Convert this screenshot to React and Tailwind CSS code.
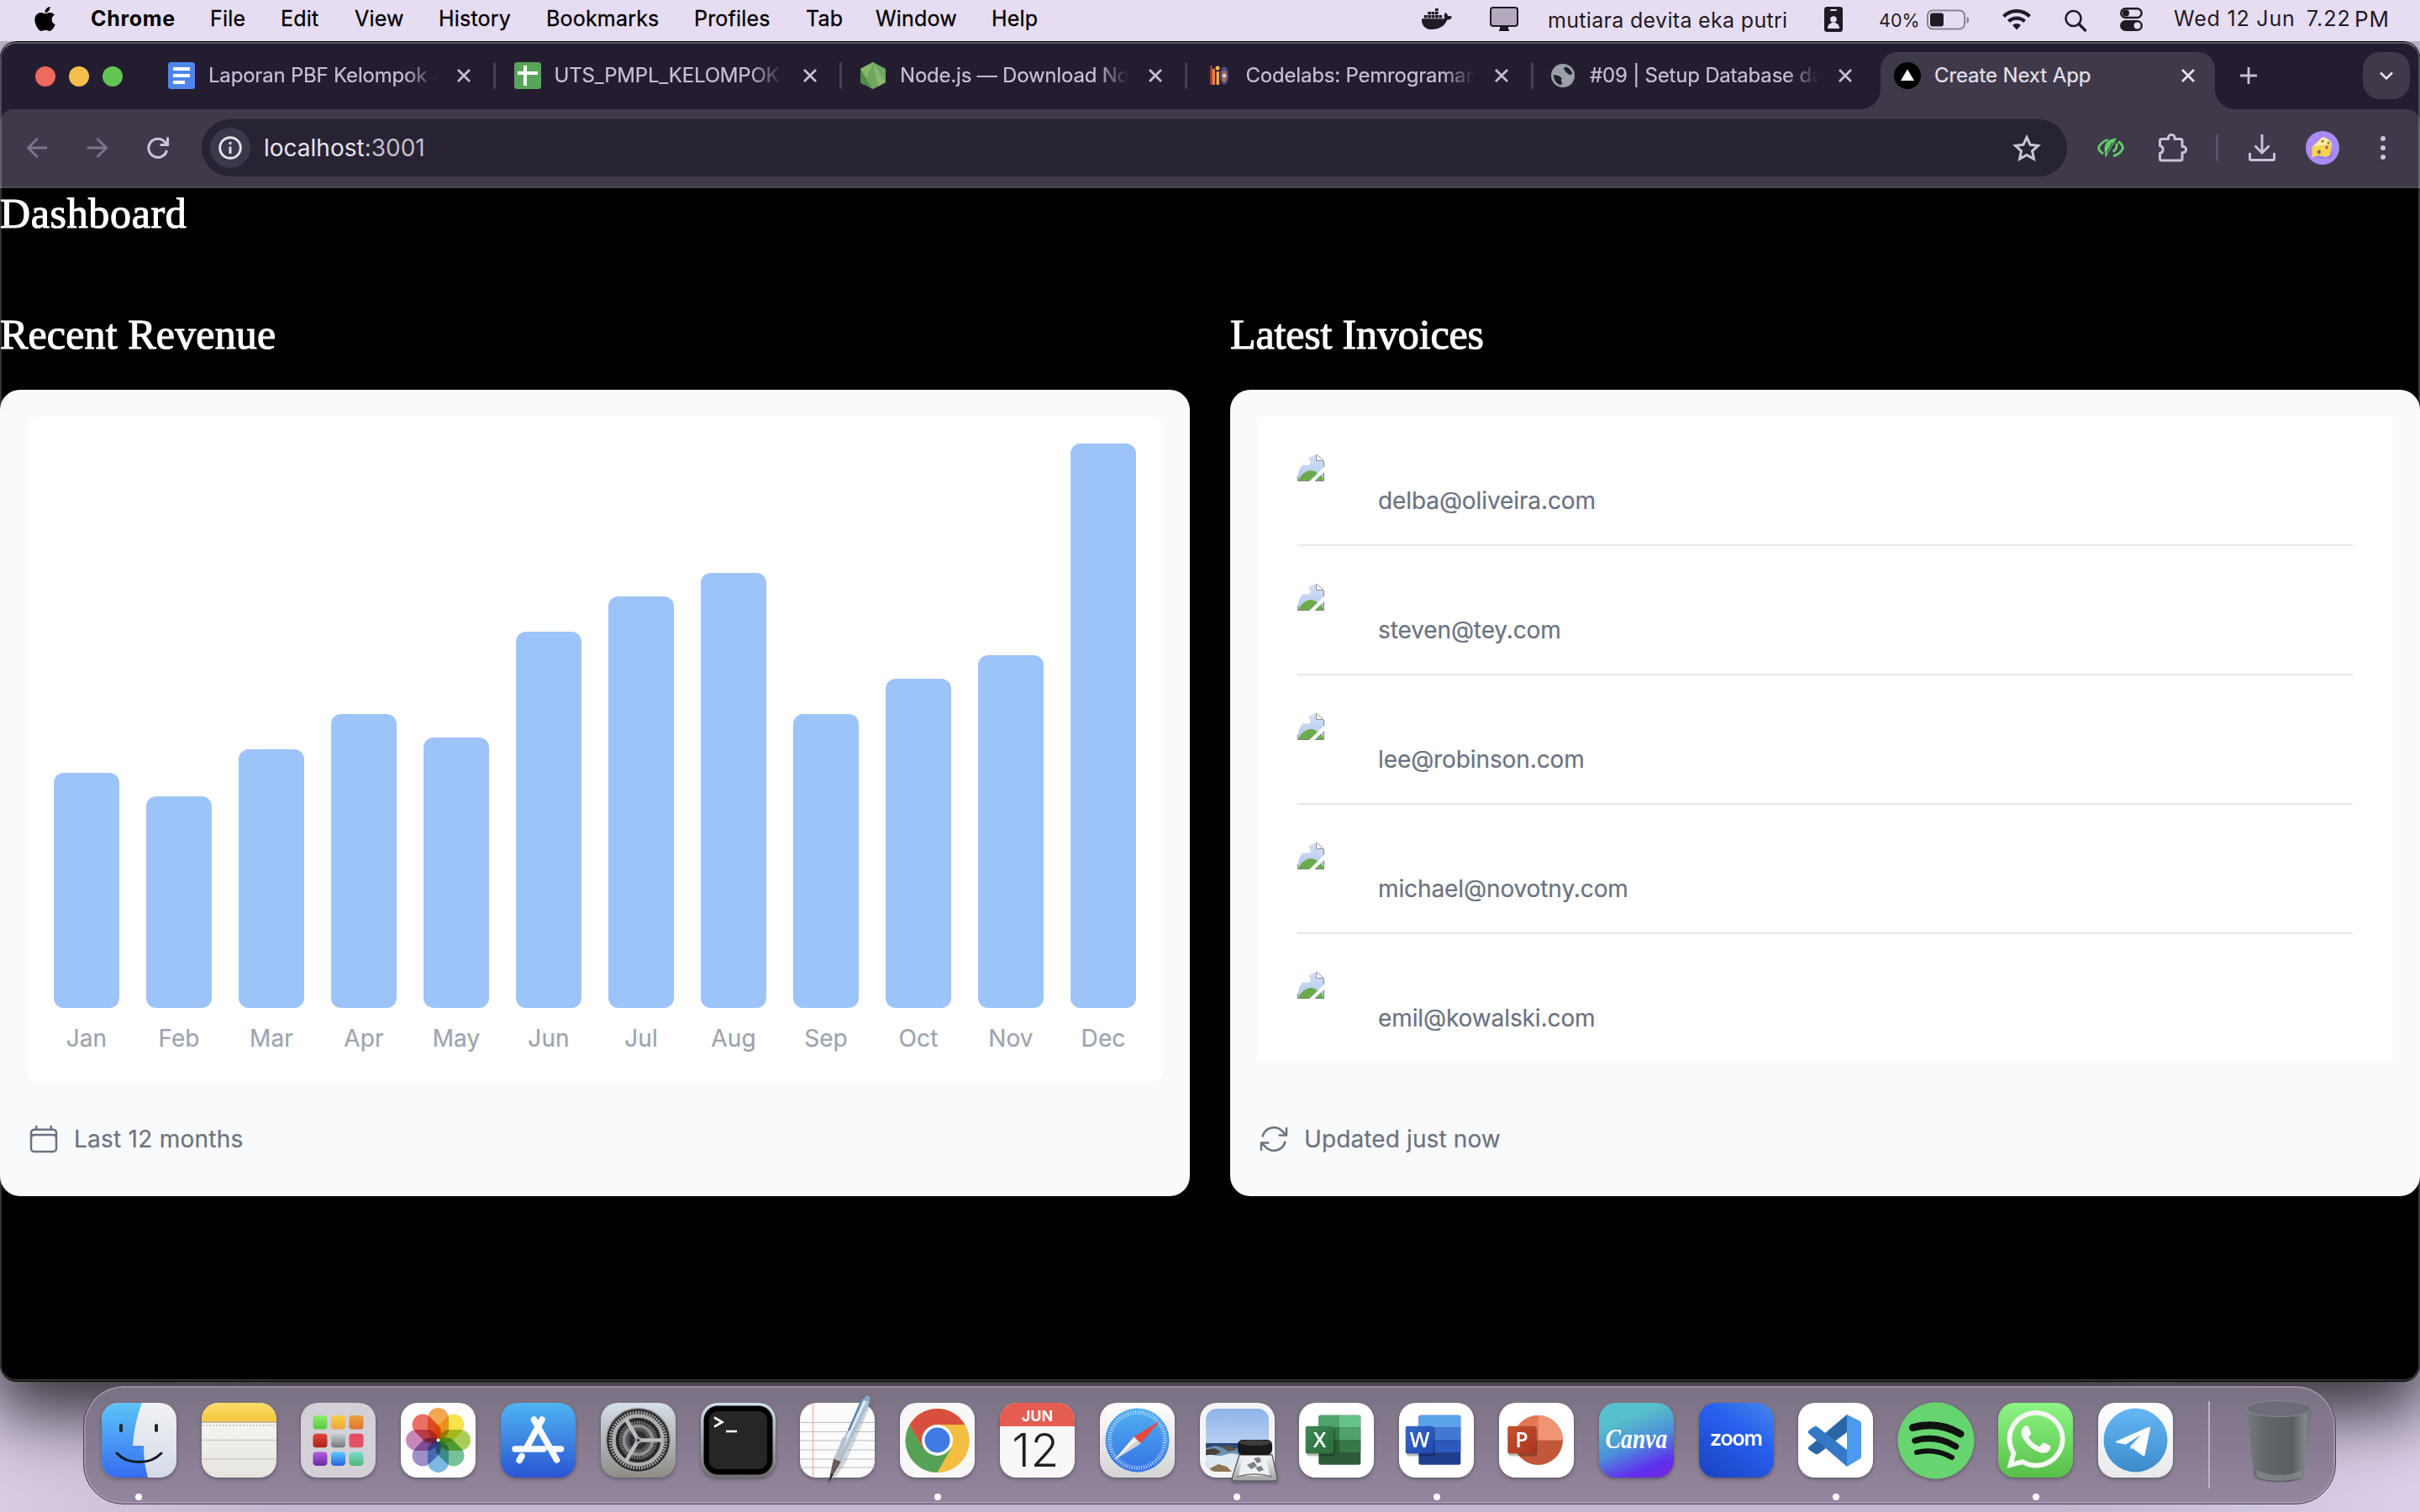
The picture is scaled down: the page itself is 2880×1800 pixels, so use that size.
import React from "react";
import { FaApple, FaDocker, FaWhatsapp } from "react-icons/fa";

/* ---------- Menu bar ---------- */

const menus = [
  ["File", "w-[84px]"],
  ["Edit", "w-[88px]"],
  ["View", "w-[100px]"],
  ["History", "w-[128px]"],
  ["Bookmarks", "w-[176px]"],
  ["Profiles", "w-[133px]"],
  ["Tab", "w-[83px]"],
  ["Window", "w-[138px]"],
  ["Help", "w-[80px]"],
];

function MenuBar() {
  return (
    <header className="relative z-20 flex h-[49px] shrink-0 items-center bg-[#e7ddf2] pb-[4px] text-[25px] leading-[45px] text-black">
      <div className="flex w-[108px] shrink-0 pl-[37px]">
        <FaApple className="h-[33px] w-[33px]" />
      </div>
      <div className="w-[142px] shrink-0 font-bold tracking-[0.7px]">Chrome</div>
      {menus.map(([label, w]) => (
        <div key={label} className={`${w} shrink-0 tracking-[0.2px] [-webkit-text-stroke:0.3px_black]`}>
          {label}
        </div>
      ))}
      <div className="grow" />
      <div className="flex h-[45px] shrink-0 items-center text-[#1f1a24]">
        <div className="w-[81px]">
          <FaDocker className="h-[37px] w-[36px]" />
        </div>
        <svg className="mr-[35px] h-[30px] w-[34px]" viewBox="0 0 34 30">
          <rect x="1" y="1" width="32" height="22" rx="3" fill="#b5aabd" stroke="currentColor" strokeWidth="2" />
          <path d="M12 24h10v3h1v2H11v-2h1z" fill="currentColor" />
        </svg>
        <div className="w-[329px] pt-[3px] tracking-[0.32px]">mutiara devita eka putri</div>
        <svg className="mr-[43px] h-[30px] w-[22px]" viewBox="0 0 22 30">
          <rect width="22" height="30" rx="3.500" fill="currentColor" />
          <rect x="7" y="3" width="8" height="2" rx="1" fill="#e7ddf2" />
          <circle cx="11" cy="15" r="3.800" fill="#e7ddf2" />
          <path d="M4 26c0-5 3-7 7-7s7 2 7 7z" fill="#e7ddf2" />
        </svg>
        <div className="w-[57px] pt-[3px] text-[21.500px]">40%</div>
        <svg className="mt-[3px] mr-[40px] h-[26px] w-[50px]" viewBox="0 0 50 26">
          <rect x="1" y="1.500" width="44" height="22" rx="6" fill="none" stroke="#8b8394" strokeWidth="2" />
          <rect x="4" y="4.500" width="16" height="16" rx="3" fill="currentColor" />
          <path d="M47.500 9v8q3-1 3-4t-3-4z" fill="#8b8394" />
        </svg>
        <svg className="mr-[40px] h-[26px] w-[34px]" viewBox="0 0 34 26" fill="none" stroke="currentColor" strokeWidth="4.200">
          <path d="M1.500 9.500a22 22 0 0 1 31 0" />
          <path d="M7.500 15.500a13.500 13.500 0 0 1 19 0" />
          <path d="M17 25.500l-5-5.500a7 7 0 0 1 10 0z" fill="currentColor" stroke="none" />
        </svg>
        <svg className="mt-[3px] mr-[39px] h-[27px] w-[27px]" viewBox="0 0 27 27" fill="none" stroke="currentColor" strokeWidth="2.600">
          <circle cx="10.500" cy="11" r="9" />
          <path d="M17 17.500l7.500 7.500" strokeWidth="3.200" strokeLinecap="round" />
        </svg>
        <svg className="mr-[37px] h-[28px] w-[27px]" viewBox="0 0 27 28">
          <rect x="1.200" y="1.200" width="24.500" height="10.800" rx="5.400" fill="none" stroke="currentColor" strokeWidth="2.400" />
          <circle cx="7" cy="6.600" r="4" fill="currentColor" />
          <rect y="15" width="27" height="13" rx="6.500" fill="currentColor" />
          <circle cx="20.500" cy="21.500" r="4" fill="#e7ddf2" />
        </svg>
        <div className="w-[158px] tracking-[0.8px]">Wed 12 Jun</div>
        <div className="w-[57px] tracking-[1px]">7.22</div>
        <div className="w-[78px] text-[26px] tracking-[1px]">PM</div>
      </div>
    </header>
  );
}

/* ---------- Browser chrome ---------- */

const DocsIcon = () => (
  <svg viewBox="0 0 32 32" className="h-8 w-8 shrink-0">
    <rect width="32" height="32" rx="3.500" fill="#5086ec" />
    <path d="M6 6h20v4H6zM6 14h20v4H6zM6 22h14v4H6z" fill="#fff" />
  </svg>
);
const SheetsIcon = () => (
  <svg viewBox="0 0 32 32" className="h-8 w-8 shrink-0">
    <rect width="32" height="32" rx="3.500" fill="#57a55a" />
    <path d="M11 4h4v7h13v4H15v13h-4V15H4v-4h7z" fill="#fff" />
  </svg>
);
const NodeIcon = () => (
  <svg viewBox="0 0 32 32" className="h-8 w-8 shrink-0">
    <path d="M16 0l15 8v16l-15 8L1 24V8z" fill="#6fa85c" />
    <path d="M16 0L1 8v16l4 3z" fill="#86b867" />
    <path d="M1 8l14 24-14-8z" fill="#4e8a48" />
    <path d="M16 0l6 29 9-5z" fill="#8ab673" />
  </svg>
);
const CodelabsIcon = () => (
  <svg viewBox="0 0 32 32" className="h-8 w-8 shrink-0">
    <rect x="5" y="4" width="3" height="23" rx="1.500" fill="#8c3b3e" />
    <rect x="7.500" y="8" width="3.500" height="19" rx="1" fill="#ee7a38" />
    <circle cx="14" cy="7" r="2.500" fill="#f2b84a" />
    <rect x="12.500" y="11" width="3.500" height="16" rx="1" fill="#f4a54c" />
    <ellipse cx="22" cy="16" rx="5" ry="11" fill="#4c4a86" />
    <ellipse cx="22" cy="17" rx="3.200" ry="7" fill="#a9704e" />
    <circle cx="22" cy="16" r="2" fill="#e8dcf4" />
  </svg>
);
const GlobeIcon = () => (
  <svg viewBox="0 0 32 32" className="h-8 w-8 shrink-0">
    <circle cx="16" cy="16" r="14" fill="#9aa0a6" />
    <path d="M18 5.500c4 1 7 4 8.200 8-1.500 2-3.700 2-4.700.500s-3-1-3.500-3-2-1.500-2-3.500z" fill="#241d30" transform="translate(1 0)" />
    <path d="M4.800 15c4 .500 8 1 9.200 3.500s-1 3 .500 5-.500 3.500-2 3.500C8 25 5 21 4.800 15z" fill="#241d30" />
    <path d="M19 18.500c2.500-.500 5 .500 7 0-1 4-3.500 7-7.500 8.500-1-2 .500-3 0-4.500s-1.500-3 .500-4z" fill="#9aa0a6" />
  </svg>
);

const tabs = [
  ["Laporan PBF Kelompok 4", DocsIcon, "w-[411.500px]"],
  ["UTS_PMPL_KELOMPOK", SheetsIcon, "w-[411.500px]"],
  ["Node.js — Download Node", NodeIcon, "w-[411.500px]"],
  ["Codelabs: Pemrograman", CodelabsIcon, "w-[409.500px]"],
  ["#09 | Setup Database dan", GlobeIcon, "w-[394px]"],
];

const Close = ({ className }) => (
  <svg viewBox="0 0 20 20" className={`h-5 w-5 shrink-0 ${className ?? ""}`}>
    <path d="M3 3l14 14M17 3L3 17" stroke="currentColor" strokeWidth="2.800" />
  </svg>
);

function TabStrip() {
  return (
    <div className="flex h-[78px] items-start bg-[#241d30]">
      <div className="flex h-[78px] w-[200px] shrink-0 items-center gap-4 pl-[42px]">
        <span className="h-6 w-6 rounded-full bg-[#ed6a5e]" />
        <span className="h-6 w-6 rounded-full bg-[#f5bf4f]" />
        <span className="h-6 w-6 rounded-full bg-[#61c554]" />
      </div>
      {tabs.map(([title, Icon, w], i) => (
        <div key={title} className={`flex h-[76px] shrink-0 items-center text-[#c9bdd8] ${w}`}>
          <Icon />
          <div className="mb-px ml-4 w-[272px] shrink-0 overflow-hidden text-[24px] tracking-[-0.200px] whitespace-nowrap [-webkit-text-stroke:0.2px_#c9bdd8] [mask-image:linear-gradient(to_right,black_86%,transparent_100%)]">
            {title}
          </div>
          <Close className="ml-[22px]" />
          {i < 4 && <span className="ml-[25px] h-8 w-[3px] rounded-full bg-[#463f52]" />}
        </div>
      ))}
      <div className="relative mt-[10px] flex h-[68px] w-[398px] shrink-0 items-center rounded-t-[20px] bg-[#3f394a] pb-[12px] pl-4 text-[#e6e0ea]">
        <span className="absolute bottom-0 -left-[24px] h-[24px] w-[24px] bg-[radial-gradient(circle_at_0_0,transparent_23.500px,#3f394a_24.500px)]" />
        <span className="absolute -right-[24px] bottom-0 h-[24px] w-[24px] bg-[radial-gradient(circle_at_100%_0,transparent_23.500px,#3f394a_24.500px)]" />
        <svg viewBox="0 0 32 32" className="h-8 w-8">
          <circle cx="16" cy="16" r="16" fill="#000" />
          <path d="M16 8.500l8 13.500H8z" fill="#fff" />
        </svg>
        <div className="mb-px ml-4 w-[292px] text-[24px] tracking-[-0.100px] [-webkit-text-stroke:0.2px_#e6e0ea]">Create Next App</div>
        <Close />
      </div>
      <svg viewBox="0 0 22 22" className="mt-[27px] ml-[29px] h-[22px] w-[22px] text-[#c9bdd8]">
        <path d="M11 1v20M1 11h20" stroke="currentColor" strokeWidth="2.800" />
      </svg>
      <div className="grow" />
      <div className="mt-[10px] mr-3 flex h-14 w-14 items-center justify-center rounded-[20px] bg-[#3f394a] text-[#e6e0ea]">
        <svg viewBox="0 0 20 20" className="h-5 w-5">
          <path d="M3 6.500l7 7 7-7" fill="none" stroke="currentColor" strokeWidth="2.600" />
        </svg>
      </div>
    </div>
  );
}

function Toolbar() {
  return (
    <div className="bg-[#241d30]">
      <div className="flex h-[94px] items-center rounded-t-[16px] border-b-2 border-[#4b484f] bg-[#3f394a] text-[#cdc1dc]">
        <svg viewBox="0 0 26 26" className="ml-[31px] h-[26px] w-[26px]" fill="none" stroke="#7d7688" strokeWidth="2.800">
          <path d="M25 13H3M13.500 2L2.500 13l11 11" />
        </svg>
        <svg viewBox="0 0 26 26" className="ml-[46px] h-[26px] w-[26px]" fill="none" stroke="#7d7688" strokeWidth="2.800">
          <path d="M1 13h22M12.500 2l11 11-11 11" />
        </svg>
        <svg viewBox="0 0 28 28" className="ml-[45px] h-[28px] w-[28px]" fill="none" stroke="currentColor" strokeWidth="3.100">
          <path d="M24.500 17A11 11 0 1 1 22.500 7.500l2.500 2.500" />
          <path d="M25.500 1.500v9h-9" />
        </svg>
        <div className="ml-[38px] flex h-[68px] w-[2220px] items-center rounded-full bg-[#272333]">
          <div className="ml-[10px] flex h-12 w-12 items-center justify-center rounded-full bg-[#3c3849]">
            <svg viewBox="0 0 28 28" className="h-[28px] w-[28px]" fill="none" stroke="#e6e2ea">
              <circle cx="14" cy="14" r="12.300" strokeWidth="2.900" />
              <path d="M14 12.500V21" strokeWidth="2.900" />
              <path d="M14 7v3" strokeWidth="2.900" />
            </svg>
          </div>
          <div className="ml-4 text-[28px] leading-[40px] text-[#e8e4ec]">
            localhost<span className="text-[#c3becb]">:3001</span>
          </div>
          <div className="grow" />
          <svg viewBox="0 0 34 32" className="mr-[31px] h-[32px] w-[34px]">
            <path
              d="M17 3.500l4.100 8.800 9.400 1.100-7 6.400 2 9.400L17 24.400l-8.500 4.800 2-9.400-7-6.400 9.400-1.100z"
              fill="none"
              stroke="#cbc5d2"
              strokeWidth="3"
            />
          </svg>
        </div>
        <svg viewBox="0 0 32 26" className="ml-9 h-[26px] w-[32px]" fill="none" stroke="#5fd068" strokeWidth="2.800">
          <path d="M7 20C4 18 1.500 15 1.500 13 3.500 8 8 4.500 13 3.500M25 5.500c3 2 5 4.500 5.500 7.500-2 5.500-6 8.500-11.500 9.500" />
          <path d="M9.500 25L23 1.500C13 2.500 6.500 8 9 18.500z" fill="#5fd068" stroke="none" />
          <path d="M18.500 17.500c3.500-2 5-6 4.500-10" />
          <path d="M18 7L11 19" stroke="#3f394a" strokeWidth="1.300" />
        </svg>
        <svg viewBox="0 0 36 36" className="ml-[40px] h-[36px] w-[36px]" fill="none" stroke="currentColor" strokeWidth="3">
          <path
            d="M4.500 7.500h8V6a3.800 3.800 0 0 1 7.600 0v1.500H27a2 2 0 0 1 2 2v7h1a3.600 3.600 0 0 1 0 7.200h-1V31a2 2 0 0 1-2 2H4.500a2 2 0 0 1-2-2v-6.500a4.600 4.600 0 0 0 0-9V9.500a2 2 0 0 1 2-2z"
            strokeLinejoin="round"
          />
        </svg>
        <span className="ml-[33px] h-8 w-[3px] rounded-full bg-[#5a5366]" />
        <svg viewBox="0 0 32 32" className="ml-[36px] h-8 w-8" fill="none" stroke="currentColor" strokeWidth="2.900">
          <path d="M16 0v22M7.500 13.500L16 22l8.500-8.500M1.500 22v7a1.500 1.500 0 0 0 1.500 1.500h26a1.500 1.500 0 0 0 1.500-1.500v-7" />
        </svg>
        <svg viewBox="0 0 40 40" className="ml-[36px] h-10 w-10">
          <circle cx="20" cy="20" r="20" fill="#a98bf7" />
          <path d="M9 30l17 1.500 6-5-2 5-10 1z" fill="#8f6de0" />
          <path d="M7.500 19L20 7c5 1 10 4.500 11.500 9z" fill="#fbeb9a" />
          <path d="M7.500 19l24-3-3 13-5 2-8-2-8 2.500z" fill="#f6d254" />
          <path d="M14.500 23q3.500-1.500 3.500 2t-3.500 2q-1.500-2 0-4z" fill="#8a6a4c" />
          <ellipse cx="25" cy="19.500" rx="1.700" ry="2" fill="#8a6a4c" />
          <circle cx="20" cy="12" r="1.600" fill="#8a7046" />
          <circle cx="27" cy="14" r="1.500" fill="#8a7046" />
        </svg>
        <div className="ml-[49px] flex flex-col gap-[5px]">
          <span className="h-[6px] w-[6px] rounded-full bg-[#cdc1dc]" />
          <span className="h-[6px] w-[6px] rounded-full bg-[#cdc1dc]" />
          <span className="h-[6px] w-[6px] rounded-full bg-[#cdc1dc]" />
        </div>
      </div>
    </div>
  );
}

/* ---------- Dashboard page ---------- */

const revenue = [
  ["Jan", 2000],
  ["Feb", 1800],
  ["Mar", 2200],
  ["Apr", 2500],
  ["May", 2300],
  ["Jun", 3200],
  ["Jul", 3500],
  ["Aug", 3700],
  ["Sep", 2500],
  ["Oct", 2800],
  ["Nov", 3000],
  ["Dec", 4800],
];

const emails = [
  "delba@oliveira.com",
  "steven@tey.com",
  "lee@robinson.com",
  "michael@novotny.com",
  "emil@kowalski.com",
];

const MissingImage = () => (
  <svg viewBox="0 0 32 32" className="mt-[13px] h-8 w-8 shrink-0">
    <defs>
      <linearGradient id="sky" x1="0" y1="0" x2="0" y2="1">
        <stop offset="0" stopColor="#d3e1f8" />
        <stop offset="1" stopColor="#b6c6ea" />
      </linearGradient>
    </defs>
    <path d="M22 .500h1.500L31 8v7.500L15 31H.500v-4C1 21 3 16 6 12.500h7.500q2.500-1 2-4l-2.500-4Q17 1 22 .500z" fill="url(#sky)" />
    <path d="M31 21.500V31H21.500z" fill="#b6c6ea" />
    <path d="M1 31c3-7 9-12 15-12 3 0 6 1.500 8 3.500L15 31z" fill="#6bab4c" />
    <path d="M28 24.500l3.500 6.500h-10z" fill="#6bab4c" />
    <path d="M22.500.500v7h8.500L23.500.500z" fill="#fff" stroke="#8c8c8c" />
    <path d="M31.500 8v7M31.500 21.500v10H21M14.500 31.500H.500V26" fill="none" stroke="#7f857f" />
  </svg>
);

function RevenueCard() {
  return (
    <section className="w-[1416px]">
      <h2 className="mb-[36px] font-['Liberation_Serif',serif] text-[50px] leading-[60px] tracking-[0.150px] text-white [-webkit-text-stroke:1.1px_white]">
        Recent Revenue
      </h2>
      <div className="flex h-[960px] flex-col rounded-[24px] bg-[#f9fafc] p-8">
        <div className="flex h-[792px] items-end gap-8 rounded-[12px] bg-white p-8">
          {revenue.map(([month, value]) => (
            <div key={month} className="flex w-[78px] flex-col items-center gap-4">
              <div className="w-full rounded-[12px] bg-[#9dc4f9]" style={{ height: (value / 5000) * 700 }} />
              <p className="text-[28px] leading-10 tracking-[0.100px] text-[#9ca3af] [-webkit-text-stroke:0.2px_#9ca3af]">{month}</p>
            </div>
          ))}
        </div>
        <div className="mt-12 flex items-center text-[#6b7280]">
          <svg viewBox="0 0 24 24" className="h-10 w-10" fill="none" stroke="currentColor" strokeWidth="1.500" strokeLinecap="round" strokeLinejoin="round">
            <path d="M6.750 3v2.250M17.250 3v2.250M3 18.750V7.500a2.250 2.250 0 0 1 2.250-2.250h13.500A2.250 2.250 0 0 1 21 7.500v11.250m-18 0A2.250 2.250 0 0 0 5.250 21h13.500A2.250 2.250 0 0 0 21 18.750m-18 0v-7.500A2.250 2.250 0 0 1 5.250 9h13.500A2.250 2.250 0 0 1 21 11.250v7.500" />
          </svg>
          <p className="ml-4 text-[28px] leading-10 tracking-[0.250px] [-webkit-text-stroke:0.2px_#6b7280]">Last 12 months</p>
        </div>
      </div>
    </section>
  );
}

function InvoicesCard() {
  return (
    <section className="w-[1416px]">
      <h2 className="mb-[36px] font-['Liberation_Serif',serif] text-[50px] leading-[60px] tracking-[-0.150px] text-white [-webkit-text-stroke:1.1px_white]">
        Latest Invoices
      </h2>
      <div className="flex h-[960px] flex-col rounded-[24px] bg-[#f9fafc] p-8">
        <div className="bg-white px-12">
          {emails.map((email, i) => (
            <div
              key={email}
              className={`flex py-8 ${i > 0 ? "h-[154px] border-t-2 border-[#e5e7eb]" : "h-[152px]"}`}
            >
              <MissingImage />
              <p className="mt-12 ml-16 text-[28px] leading-10 tracking-[-0.100px] text-[#6b7280] [-webkit-text-stroke:0.2px_#6b7280]">{email}</p>
            </div>
          ))}
        </div>
        <div className="mt-[72px] flex items-center text-[#6b7280]">
          <svg viewBox="0 0 24 24" className="h-10 w-10" fill="none" stroke="currentColor" strokeWidth="1.500" strokeLinecap="round" strokeLinejoin="round">
            <path d="M16.023 9.348h4.992v-.001M2.985 19.644v-4.992m0 0h4.992m-4.993 0 3.181 3.183a8.250 8.250 0 0 0 13.803-3.700M4.031 9.865a8.250 8.250 0 0 1 13.803-3.700l3.181 3.182m0-4.991v4.990" />
          </svg>
          <p className="ml-4 text-[28px] leading-10 tracking-[0.120px] [-webkit-text-stroke:0.2px_#6b7280]">Updated just now</p>
        </div>
      </div>
    </section>
  );
}

/* ---------- Dock ---------- */

const Grad = ({ id, from, to, x2 = 0, y2 = 1 }) => (
  <linearGradient id={id} x1="0" y1="0" x2={x2} y2={y2}>
    <stop offset="0" stopColor={from} />
    <stop offset="1" stopColor={to} />
  </linearGradient>
);

const Tile = ({ fill = "#fff", children }) => (
  <svg viewBox="0 0 89 89" className="h-[89px] w-[89px] overflow-visible drop-shadow-[0_2px_2px_rgba(0,0,0,0.3)]">
    <rect width="89" height="89" rx="20" fill={fill} />
    {children}
  </svg>
);

const Finder = () => (
  <Tile fill="url(#finderR)">
    <defs>
      <Grad id="finderL" from="#5cc5f8" to="#356df0" />
      <Grad id="finderR" from="#f2f2f5" to="#d3dbe8" />
    </defs>
    <path d="M20 0h28c-6 16-10 34-11 52h13c0 14 2 26 5 37H20A20 20 0 0 1 0 69V20A20 20 0 0 1 20 0z" fill="url(#finderL)" />
    <path d="M23 27v6M65 27v6" stroke="#23262b" strokeWidth="4" strokeLinecap="round" />
    <path d="M18 60c13 14 40 14 53 0" fill="none" stroke="#15181d" strokeWidth="3" strokeLinecap="round" />
    <path d="M37 52h13" stroke="#2c6ed8" strokeWidth="1.200" />
  </Tile>
);

const Notes = () => (
  <Tile fill="url(#notes)">
    <defs>
      <Grad id="notes" from="#fbfaf7" to="#e6e4de" />
      <Grad id="notesTop" from="#f9dc69" to="#f5c63c" />
    </defs>
    <path d="M0 22v-2A20 20 0 0 1 20 0h49a20 20 0 0 1 20 20v2z" fill="url(#notesTop)" />
    <path d="M0 23h89" stroke="#b5a471" strokeWidth="1.500" />
    <path d="M1 27h88" stroke="#b3b0aa" strokeWidth="1.600" strokeDasharray="1.600 2.400" />
    <path d="M0 44.500h89M0 67h89" stroke="#cfcdc9" strokeWidth="1.500" />
  </Tile>
);

const pads = [
  ["#8fef6e", "#5ac63f"], ["#f5d048", "#efa637"], ["#eea03a", "#dd7430"],
  ["#e5463a", "#aa2318"], ["#c9d2d6", "#73777a"], ["#ea4a62", "#e25567"],
  ["#b55de0", "#6a2ca6"], ["#5bcbf8", "#2b5ee6"], ["#79dcd0", "#53b678"],
];
const Launchpad = () => (
  <Tile fill="#d3d0d8">
    {pads.map(([a, b], i) => (
      <g key={i}>
        <defs>
          <Grad id={`pad${i}`} from={a} to={b} />
        </defs>
        <rect x={14.5 + (i % 3) * 21.5} y={15 + Math.floor(i / 3) * 21.7} width="17" height="16.500" rx="3.800" fill={`url(#pad${i})`} />
      </g>
    ))}
  </Tile>
);

const petals = ["#f09a37", "#f6df33", "#9cc843", "#64b98a", "#69aee0", "#8f7fc2", "#c278b0", "#e75b52"];
const Photos = () => (
  <Tile fill="#fdfdfd">
    <g className="isolate">
      {petals.map((c, i) => (
        <rect
          key={c}
          x="32"
          y="6"
          width="25"
          height="38"
          rx="12.500"
          fill={c}
          opacity="0.88"
          className="mix-blend-multiply"
          transform={`rotate(${i * 45} 44.500 44.500)`}
        />
      ))}
      <circle cx="44.500" cy="44.500" r="2" fill="#fff" />
    </g>
  </Tile>
);

const AppStore = () => (
  <Tile fill="url(#store)">
    <defs>
      <Grad id="store" from="#4fb4f0" to="#2a55d4" />
    </defs>
    <g stroke="#f6f9ff" strokeWidth="7.500" strokeLinecap="round">
      <path d="M39.500 20L66.500 68" />
      <path d="M49 20L31 53" stroke="#fff" />
      <path d="M17 55h34M61 55h10.500" />
      <path d="M25 63.500l-3 5" />
    </g>
  </Tile>
);

const Settings = () => (
  <Tile fill="url(#set)">
    <defs>
      <Grad id="set" from="#d5e0e8" to="#8e8c86" />
    </defs>
    <circle cx="44.500" cy="44.500" r="38" fill="#29292b" stroke="#9a9a9c" strokeWidth="1.500" />
    <circle cx="44.500" cy="44.500" r="33" fill="none" stroke="#a8a8a8" strokeWidth="4" strokeDasharray="1.800 1.500" />
    <circle cx="44.500" cy="44.500" r="29" fill="none" stroke="#aeaeae" strokeWidth="4.500" />
    <circle cx="44.500" cy="44.500" r="21" fill="none" stroke="#77777a" strokeWidth="3.500" strokeDasharray="1.800 1.200" />
    <circle cx="44.500" cy="44.500" r="17" fill="#55565a" stroke="#8f8f92" strokeWidth="4" />
    <circle cx="44.500" cy="44.500" r="11" fill="#2f3033" />
    <path d="M44.500 44.500H73M44.500 44.500L30 19.500M44.500 44.500L30 69.500" stroke="#bdbdbd" strokeWidth="4.500" />
    <circle cx="44.500" cy="44.500" r="4" fill="#a5a5a5" />
    <circle cx="44.500" cy="44.500" r="1.500" fill="#222" />
  </Tile>
);

const Terminal = () => (
  <Tile fill="url(#term)">
    <defs>
      <Grad id="term" from="#cfe0ea" to="#6f6d6c" />
    </defs>
    <rect x="3.500" y="3.500" width="82" height="82" rx="17" fill="#000" />
    <rect x="10" y="10" width="69" height="69" rx="10" fill="#262626" />
    <path d="M16 17.500l9.500 5.500-9.500 5.500" fill="none" stroke="#fff" strokeWidth="2.600" />
    <path d="M30 34h13" stroke="#fff" strokeWidth="2.600" />
  </Tile>
);

const TextEdit = () => (
  <Tile fill="#fbfbfb">
    <path d="M0 23.500h89M0 34.500h89M0 45h89M0 56h89M0 67h89M0 77h89" stroke="#bdbdbf" strokeWidth="1.200" />
    <path d="M15.500 1v87" stroke="#f0b9b4" strokeWidth="1.500" />
    <path d="M79-9l5.500 1.500L51 70l-17 25 8-29z" fill="#7d8b98" opacity="0.350" transform="translate(3 2)" />
    <path d="M75.500-5l8 3L49 70l-9-3.500z" fill="#a9bfd3" />
    <path d="M79.500-3l-34 71-3-1L77-5z" fill="#dfeaf4" />
    <path d="M78.500-9l5.500 2-2 6-6-2z" fill="#87a9c6" />
    <path d="M74-4L58 33" stroke="#5e86ab" strokeWidth="2.500" />
    <path d="M49 70l-9-3.500L34 95z" fill="#6b5a58" />
    <path d="M56 42l-9 26-6-2 10-25z" fill="#b9c0c8" />
    <path d="M37 84l3 1.500L34 95z" fill="#2d2c2e" />
  </Tile>
);

const Chrome = () => (
  <Tile fill="#f8f8f8">
    <circle cx="44.500" cy="45" r="38" fill="#f3be42" />
    <path d="M11.600 26A38 38 0 0 0 44.500 83l17-29.500L44.500 45 28 54.500z" fill="#55a257" />
    <path d="M44.500 26h33a38 38 0 0 1-33 57L61 54.500z" fill="#f3be42" />
    <path d="M11.600 26a38 38 0 0 1 65.800 0H44.500L28 54.500z" fill="#d94f3d" />
    <circle cx="44.500" cy="44.500" r="18.500" fill="#fff" />
    <circle cx="44.500" cy="44.500" r="15" fill="#3f7ae6" />
  </Tile>
);

const Calendar = () => (
  <Tile fill="#f9f8f6">
    <path d="M0 28v-8A20 20 0 0 1 20 0h49a20 20 0 0 1 20 20v8z" fill="#e55d51" />
    <text x="44.500" y="21.500" textAnchor="middle" fontSize="18" fontWeight="700" fill="#fff" className="font-['Inter',sans-serif]">
      JUN
    </text>
    <text x="42.500" y="75.500" textAnchor="middle" fontSize="55" fontWeight="300" letterSpacing="0.500" fill="#1f2022" className="font-['Inter',sans-serif]">
      12
    </text>
  </Tile>
);

const Safari = () => (
  <Tile fill="url(#saf)">
    <defs>
      <Grad id="saf" from="#ffffff" to="#d4d4d4" />
      <Grad id="safIn" from="#4fb0f1" to="#3672e3" />
    </defs>
    <circle cx="44.500" cy="44.500" r="38" fill="url(#safIn)" />
    <circle cx="44.500" cy="44.500" r="33" fill="none" stroke="#cfe6fb" strokeWidth="5" strokeDasharray="0.900 1.980" />
    <path d="M72 21L48.500 48.500l-8-8z" fill="#e8493f" />
    <path d="M17 68l23.500-27.500 8 8z" fill="#f6f4f4" />
    <path d="M17 68l27.500-23.500 4 4z" fill="#cfd3d8" />
  </Tile>
);

const Preview = () => (
  <Tile fill="#f4f4f6">
    <defs>
      <Grad id="pv" from="#8fb4ea" to="#b9cff0" />
      <Grad id="loupe" from="#f4f5f6" to="#9fa1a3" />
      <clipPath id="pvClip">
        <rect x="7" y="7" width="75" height="75" rx="13" />
      </clipPath>
    </defs>
    <g clipPath="url(#pvClip)">
      <rect x="7" y="7" width="75" height="42" fill="url(#pv)" />
      <rect x="7" y="48" width="75" height="34" fill="#2d4677" />
      <path d="M7 54l12-3 12 4 14-1 10 4v24H7z" fill="#6f90b4" />
      <path d="M7 63c6-3 12 1 18 0s12-4 18-2 8 3 12 3v18H7z" fill="#dfe9f2" />
      <path d="M7 56l10-2 8 4-6 4H7z" fill="#4a4238" />
      <path d="M24 52l12-1 8 5-10 2z" fill="#5a5145" />
      <path d="M12 78l10-5 10 3 6 6H14z" fill="#8d7653" />
    </g>
    <path d="M47 62l-9 28q0 3 4 3h46q4 0 4-3l-6-28z" fill="url(#loupe)" stroke="#5d5f61" strokeWidth="1.400" />
    <path d="M51 63l-5 24h37l-4-24z" fill="#eef0f2" />
    <path d="M56 74l8-4 4 5-7 4zM64 66l7-1 2 5-5 2zM66 77l7-2 3 5-6 2z" fill="#7b7f86" />
    <path d="M44 88q22-6 42 0" fill="none" stroke="#77797b" strokeWidth="1.500" />
    <rect x="45" y="44" width="41" height="18" rx="6" fill="#19191a" />
    <ellipse cx="65.500" cy="47.500" rx="18.500" ry="3.600" fill="#3c3c3e" />
  </Tile>
);

const OfficeLetter = ({ id, from, to, children }) => (
  <>
    <defs>
      <Grad id={id} from={from} to={to} x2={1} />
    </defs>
    <rect x="9" y="29.500" width="34" height="34" rx="3" fill="#000" opacity="0.250" />
    <rect x="7.700" y="27.800" width="33.600" height="32.700" rx="2.500" fill={`url(#${id})`} />
    <text x="24.500" y="53" textAnchor="middle" fontSize="25" fontWeight="600" fill="#fff" className="font-['Open_Sans',sans-serif]">
      {children}
    </text>
  </>
);

const Excel = () => (
  <Tile>
    <rect x="23.300" y="14.800" width="50" height="59" rx="2.500" fill="#2d5b38" />
    <path d="M25.800 14.800H48v14.700H23.300V17.300a2.500 2.500 0 0 1 2.500-2.500z" fill="#50a26b" />
    <path d="M48 14.800h22.800a2.500 2.500 0 0 1 2.500 2.500v12.200H48z" fill="#66c388" />
    <path d="M48 29.500h25.300v14.700H48z" fill="#50a26b" />
    <path d="M23.300 29.500H48v14.700H23.300z" fill="#377a48" />
    <path d="M48 44.200h25.300V59H48z" fill="#377a48" />
    <OfficeLetter id="xl" from="#3c8a53" to="#2c6a3a">X</OfficeLetter>
  </Tile>
);

const Word = () => (
  <Tile>
    <rect x="23.300" y="14.800" width="50" height="59" rx="2.500" fill="#1f3f8c" />
    <path d="M25.800 14.800h45a2.500 2.500 0 0 1 2.500 2.500v12.200h-50V17.300a2.500 2.500 0 0 1 2.500-2.500z" fill="#5ba2ea" />
    <path d="M23.300 29.500h50v14.700h-50z" fill="#4479d2" />
    <path d="M23.300 44.200h50V59h-50z" fill="#2c59bd" />
    <OfficeLetter id="wd" from="#3368c8" to="#2148ae">W</OfficeLetter>
  </Tile>
);

const PowerPoint = () => (
  <Tile>
    <circle cx="46.500" cy="44.500" r="29.500" fill="#c2583a" />
    <path d="M17 44.500a29.500 29.500 0 0 1 29.500-29.500v29.500z" fill="#df7853" />
    <path d="M46.500 15A29.500 29.500 0 0 1 76 44.500H46.500z" fill="#f09573" />
    <g transform="translate(2.500 0)">
      <OfficeLetter id="pp" from="#c4502f" to="#a9361f">P</OfficeLetter>
    </g>
  </Tile>
);

const Canva = () => (
  <Tile fill="url(#canva)">
    <defs>
      <linearGradient id="canva" x1="0.300" y1="0" x2="0.700" y2="1">
        <stop offset="0.200" stopColor="#57bfcb" />
        <stop offset="0.550" stopColor="#4c8fd8" />
        <stop offset="0.880" stopColor="#5f2df0" />
        <stop offset="1" stopColor="#6d2be0" />
      </linearGradient>
    </defs>
    <text
      x="44.500"
      y="54"
      textAnchor="middle"
      fontSize="33"
      fontWeight="700"
      fontStyle="italic"
      fill="#fff"
      textLength="74"
      lengthAdjust="spacingAndGlyphs"
      className="font-['Liberation_Serif',serif]"
    >
      Canva
    </text>
  </Tile>
);

const Zoom = () => (
  <Tile fill="url(#zoom)">
    <defs>
      <linearGradient id="zoom" x1="0.900" y1="0" x2="0.200" y2="1">
        <stop offset="0" stopColor="#4284ea" />
        <stop offset="0.400" stopColor="#2760ee" />
        <stop offset="1" stopColor="#1c45c6" />
      </linearGradient>
    </defs>
    <text x="44" y="51" textAnchor="middle" fontSize="25" fontWeight="600" letterSpacing="-1.200" fill="#fff" className="font-['Inter',sans-serif]">
      zoom
    </text>
  </Tile>
);

const VSCode = () => (
  <Tile>
    <path d="M12 53l6-5L58 14v21L25 60q-3 2.500-6 0l-6-4q-2-1.500-1-3z" fill="#2a66a6" />
    <path d="M12 36q-1-2 1-3.500l5-3.500q3-2 6 .500L58 56v20L12 36z" fill="#3478c6" />
    <path d="M58 14l15 7.500q2 1 2 3v39.500q0 2-2 3L58 76z" fill="#4b9aec" />
  </Tile>
);

const Spotify = () => (
  <svg viewBox="0 0 92 92" className="-m-[1.500px] h-[92px] w-[92px] drop-shadow-[0_2px_2px_rgba(0,0,0,0.3)]">
    <circle cx="46" cy="46" r="45.500" fill="#67d56f" />
    <g fill="none" stroke="#0f120f" strokeLinecap="round">
      <path d="M18.500 30.500c19-5 39-3 56.500 7.500" strokeWidth="9" />
      <path d="M21 46c16-4.500 33-2.500 48.500 7" strokeWidth="7.500" />
      <path d="M23 60c14-3.500 28-1.500 42 6" strokeWidth="6" />
    </g>
  </svg>
);

const WhatsApp = () => (
  <Tile fill="url(#wa)">
    <defs>
      <Grad id="wa" from="#8df584" to="#57bf48" />
    </defs>
    <FaWhatsapp x="5.500" y="4" width="79" height="79" size={79} color="#f7f7f5" />
  </Tile>
);

const Telegram = () => (
  <Tile fill="url(#tgT)">
    <defs>
      <Grad id="tgT" from="#ffffff" to="#e9e9ea" />
      <Grad id="tg" from="#66b7f5" to="#3d8bcb" />
    </defs>
    <circle cx="44.500" cy="44.500" r="38" fill="url(#tg)" />
    <path d="M21 46L59.500 29q3-1 2.500 2l-6.500 31q-.700 2-2.500 1L38 52l13-14-18 11.500-11-2q-2-.500-1-1.500z" fill="#fff" />
    <path d="M38 52l13-14-12 18z" fill="#d5e8f7" />
  </Tile>
);

const Trash = () => (
  <svg viewBox="0 0 89 100" className="-mt-[4px] h-[100px] w-[89px]">
    <defs>
      <linearGradient id="bin" x1="0" x2="1" y1="0" y2="0">
        <stop offset="0" stopColor="#757b80" />
        <stop offset="0.250" stopColor="#62686b" />
        <stop offset="0.700" stopColor="#585e61" />
        <stop offset="0.900" stopColor="#808789" />
        <stop offset="1" stopColor="#686e71" />
      </linearGradient>
    </defs>
    <path d="M6 12l8 78q1 5 7 6 23 5 46 0 6-1 7-6l9-78z" fill="url(#bin)" />
    <path d="M17 84q27 12 55 0l-1 7q-3 5-26 6-24-1-27-6z" fill="#8f9596" opacity="0.600" />
    <ellipse cx="44.500" cy="11" rx="38.500" ry="9.500" fill="#6d6c78" stroke="#868691" strokeWidth="1.200" />
  </svg>
);

const apps = [
  [Finder, true],
  [Notes],
  [Launchpad],
  [Photos],
  [AppStore],
  [Settings],
  [Terminal],
  [TextEdit],
  [Chrome, true],
  [Calendar],
  [Safari],
  [Preview, true],
  [Excel],
  [Word, true],
  [PowerPoint],
  [Canva],
  [Zoom],
  [VSCode, true],
  [Spotify],
  [WhatsApp, true],
  [Telegram],
];

function Dock() {
  return (
    <div className="relative z-10 mt-[4px] ml-[99px] flex h-[142px] w-[2681px] rounded-[48px] border border-[#4d4554] bg-linear-to-b from-[#7b7183] to-[#94869f] pt-[20px] pl-[6px] shadow-[inset_0_0_0_2px_rgba(190,175,200,0.45)]">
      {apps.map(([Icon, running], i) => (
        <div key={i} className="flex w-[118.800px] shrink-0 flex-col items-center">
          <div className="h-[89px]">
            <Icon />
          </div>
          {running && <span className="mt-[19px] h-2 w-2 rounded-full bg-white" />}
        </div>
      ))}
      <div className="-mt-[2px] ml-[27px] h-[104px] w-[2px] bg-[#bdb0c8]" />
      <div className="ml-[38px] w-[89px]">
        <Trash />
      </div>
    </div>
  );
}

export default function App() {
  return (
    <div className="flex h-[1800px] w-[2880px] flex-col overflow-hidden bg-[#cdc0dc] bg-[linear-gradient(to_right,#d8cbe4,#c3b6d0_12%,#c3b6d0_85%,#dccfea)] font-['Inter',sans-serif]">
      <MenuBar />
      <div className="relative h-[1596px] shrink-0 overflow-hidden rounded-[20px] bg-black pt-[3px] shadow-[0_30px_80px_10px_rgba(0,0,0,0.75)]">
        <TabStrip />
        <Toolbar />
        <main className="bg-black">
          <h1 className="font-['Liberation_Serif',serif] text-[50px] leading-[60px] tracking-[0.650px] text-white [-webkit-text-stroke:1.1px_white]">
            Dashboard
          </h1>
          <div className="mt-[84px] flex gap-12">
            <RevenueCard />
            <InvoicesCard />
          </div>
        </main>
        <div className="pointer-events-none absolute inset-x-0 top-px bottom-px rounded-[19px] border-x-2 border-t-2 border-b-2 border-white/20 border-t-white/35" />
      </div>
      <Dock />
    </div>
  );
}
